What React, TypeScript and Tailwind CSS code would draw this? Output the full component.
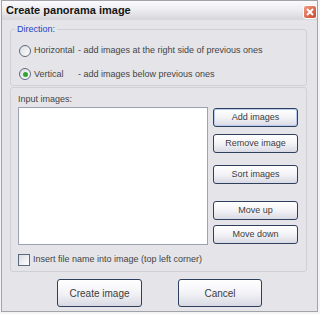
import type { ReactNode } from "react";

function XpButton({ children, className = "", focused = false }: { children: ReactNode; className?: string; focused?: boolean }) {
    return (
        <button
            className={`flex items-center justify-center rounded-[3px] border border-[#2f3f5e] bg-gradient-to-b from-[#ffffff] via-[#f3f3f7] to-[#d8d9e3] text-[#3c3c3c] ${
                focused ? "shadow-[inset_0_0_0_1px_#b7c9ec]" : ""
            } ${className}`}
        >
            {children}
        </button>
    );
}

function Radio({ checked }: { checked?: boolean }) {
    return (
        <span className="flex h-[12px] w-[12px] items-center justify-center rounded-full border border-[#5a6a80] bg-gradient-to-br from-[#dcdce0] to-[#ffffff]">
            {checked && <span className="h-[5px] w-[5px] rounded-full bg-[#2fa52f]" />}
        </span>
    );
}

export default function App() {
    return (
        <div className="h-[314px] w-[320px] bg-[#f4f4f6] pl-[1px] font-['Liberation_Sans',Arial,sans-serif] text-[9px] text-[#444]">
            <div className="flex h-[312px] w-[317px] flex-col border border-[#a3a3ab] bg-[#e5e4e9]">
                {/* Title bar */}
                <div className="flex h-[19px] items-center justify-between bg-gradient-to-b from-[#fbfbfc] via-[#ececef] to-[#d5d5da] pl-[4px]">
                    <span className="text-[11px] font-bold text-[#141414]">Create panorama image</span>
                    <span className="mt-[3px] flex h-[14px] w-[14px] items-center justify-center rounded-[3px] border border-white bg-gradient-to-br from-[#f09a80] to-[#c8442c]">
                        <svg width="8" height="8" viewBox="0 0 8 8">
                            <path d="M1 1 L7 7 M7 1 L1 7" stroke="white" strokeWidth="1.8" />
                        </svg>
                    </span>
                </div>

                <div className="flex flex-1 flex-col pl-[8px] pr-[10px]">
                    {/* Direction */}
                    <fieldset className="mt-[4px] h-[62px] rounded-[3px] border border-[#d0d0d7] pl-[8px]">
                        <legend className="-ml-[4px] px-[2px] leading-[10px] text-[#1b45c4]">Direction:</legend>
                        <div className="mt-[10px] flex flex-col gap-[10px]">
                            <label className="flex items-center">
                                <Radio />
                                <span className="ml-[3px] w-[44px]">Horizontal</span>
                                <span>- add images at the right side of previous ones</span>
                            </label>
                            <label className="flex items-center">
                                <Radio checked />
                                <span className="ml-[3px] w-[44px]">Vertical</span>
                                <span>- add images below previous ones</span>
                            </label>
                        </div>
                    </fieldset>

                    {/* Input images */}
                    <div className="mt-[1px] flex h-[185px] flex-col rounded-[3px] border border-[#d0d0d7] pl-[7px] pr-[7px] pt-[6px]">
                        <p className="leading-[11px]">Input images:</p>
                        <div className="mt-[2px] flex">
                            <div className="h-[138px] w-[190px] border border-[#9aa3b4] bg-white" />
                            <div className="ml-[5px] flex w-[85px] flex-col pt-[1px]">
                                <XpButton focused className="h-[19px]">Add images</XpButton>
                                <XpButton className="mt-[7px] h-[19px]">Remove image</XpButton>
                                <XpButton className="mt-[12px] h-[19px]">Sort images</XpButton>
                                <XpButton className="mt-[17px] h-[19px]">Move up</XpButton>
                                <XpButton className="mt-[5px] h-[19px]">Move down</XpButton>
                            </div>
                        </div>
                        <label className="mt-[8px] flex items-center">
                            <span className="h-[12px] w-[12px] border border-[#5a6a80] bg-gradient-to-br from-[#dcdce0] to-[#ffffff]" />
                            <span className="ml-[3px]">Insert file name into image (top left corner)</span>
                        </label>
                    </div>

                    {/* Bottom buttons */}
                    <div className="mt-[7px] flex justify-center gap-[36px] pl-[2px]">
                        <XpButton className="h-[28px] w-[85px] text-[10px]">Create image</XpButton>
                        <XpButton className="h-[28px] w-[84px] text-[10px]">Cancel</XpButton>
                    </div>
                </div>
            </div>
        </div>
    );
}
